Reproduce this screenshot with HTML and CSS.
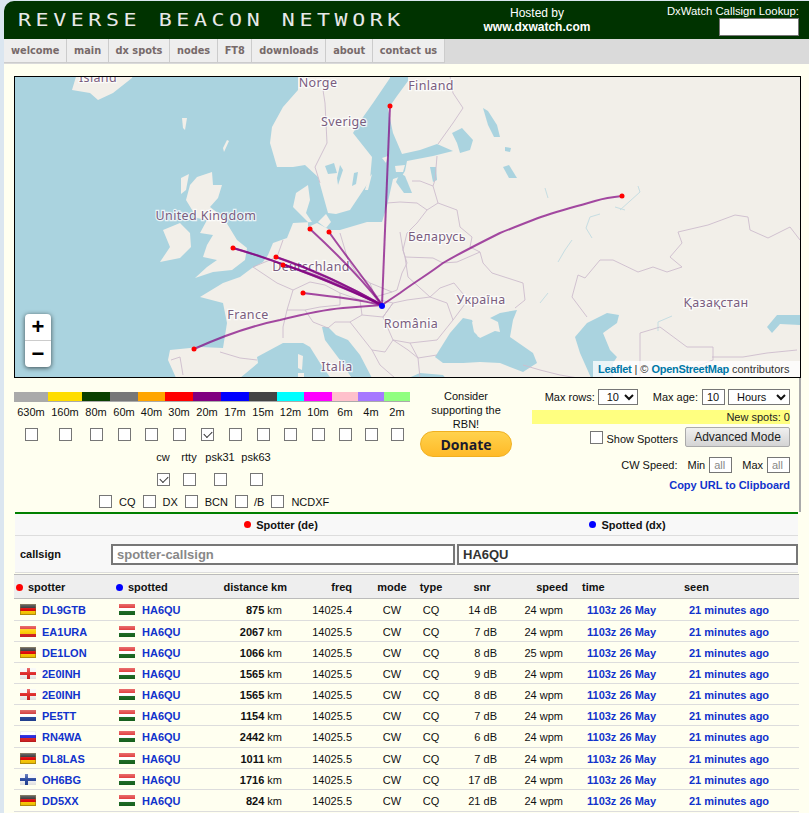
FILE: index.html
```
<!DOCTYPE html>
<html lang="en">
<head>
<meta charset="utf-8">
<title>Reverse Beacon Network</title>
<link rel="stylesheet" href="styles.css">
</head>
<body>
<div class="page">
  <header class="header">
    <div class="logo"><span class="logo-text">REVERSE BEACON NETWORK</span></div>
    <div class="hosted">Hosted by<br><b>www.dxwatch.com</b></div>
    <div class="lookup">
      <label class="lookup-label">DxWatch Callsign Lookup:</label>
      <input class="lookup-input" type="text">
    </div>
  </header>
  <nav class="nav">
    <a class="tab">welcome</a><a class="tab">main</a><a class="tab">dx spots</a><a class="tab">nodes</a><a class="tab">FT8</a><a class="tab">downloads</a><a class="tab">about</a><a class="tab">contact us</a>
  </nav>
  <main class="main">
    <div class="map">
      <svg class="map-svg" viewBox="15 77 785 300" width="785" height="300" xmlns="http://www.w3.org/2000/svg">
        <rect x="0" y="0" width="820" height="400" fill="#aad3df"/>
        <g class="geo">
          <g fill="#f2efe9">
            <path d="M78,70 L72,90 90,93 98,100 113,93 132,78 134,70Z"/>
            <path d="M163,230 180,223 190,233 191,247 180,258 160,262 170,247Z"/>
            <path d="M197,177 212,172 213,185 222,185 218,198 210,207 223,217 237,240 247,248 245,260 232,270 213,272 195,278 207,267 217,260 203,257 207,245 213,235 200,233 207,220 197,218 186,200 190,185Z"/>
            <path d="M182,118 187,118 185,130 183,128Z"/>
            <path d="M227,140 229,141 224,152 223,148Z"/>
            <path d="M181,178 189,174 186,190 181,194Z"/>
            <path d="M298,70 L298,90 283,107 272,127 270,143 277,167 293,167 305,165 318,177 328,213 336,214 350,210 370,180 372,157 353,133 361,120 373,103 390,78 390,70Z"/>
            <path d="M408,70 L408,81 397,96 388,109 393,133 402,154 420,150 437,144 453,151 433,156 407,161 405,171 402,176 393,179 387,206 382,222 367,222 340,230 330,230 317,223 308,227 308,222 293,207 296,193 308,185 310,200 306,213 312,222 293,223 287,238 273,243 268,255 263,262 252,268 240,277 223,283 200,297 223,303 227,323 223,348 200,347 170,350 168,360 177,380 820,380 820,70Z"/>
            <path d="M318,222 326,214 331,222 326,228Z"/>
            <path d="M368,179 372,174 368,190 365,190Z"/>
          </g>
          <g fill="#aad3df">
            <path d="M240,378 258,363 257,357 283,343 303,343 310,347 320,363 332,380 240,380Z"/>
            <path d="M322,327 328,327 336,335 348,340 360,355 373,380 353,380 340,360 325,340Z"/>
            <path d="M435,357 450,333 463,318 472,320 478,337 490,330 500,332 498,322 490,318 500,313 517,310 513,320 510,337 533,353 537,363 523,372 500,363 480,362 463,363 443,363Z"/>
            <path d="M575,337 587,323 607,313 619,315 617,323 603,333 610,350 617,357 613,363 613,380 592,380 580,353Z"/>
            <path d="M404,380 420,373 443,375 447,380Z"/>
            <path d="M400,173 405,176 412,193 404,193 396,182Z"/>
            <path d="M452,133 462,128 473,140 470,150 460,153 457,143Z"/>
            <path d="M483,108 488,111 497,125 500,137 494,137 488,125Z"/>
            <path d="M430,167 436,167 437,180 433,182Z"/>
            <path d="M503,167 509,165 517,178 509,178Z"/>
            <path d="M505,147 511,148 510,152 505,151Z"/>
            <path d="M767,327 777,315 800,315 800,325 780,324 772,333Z"/>
            <path d="M325,166 334,163 337,173 328,174Z"/>
            <path d="M340,165 343,170 338,185 337,178Z"/>
            <path d="M354,173 358,172 356,184 352,186Z"/>
          </g>
          <g fill="#f2efe9">
            <path d="M472,322 490,325 497,330 480,338 474,332Z"/>
            <path d="M298,354 303,356 302,370 298,368Z"/>
            <path d="M298,373 304,373 304,380 298,380Z"/>
            <path d="M395,166 405,165 403,172 396,172Z"/>
            <path d="M382,158 388,156 386,163Z"/>
          </g>
          <g class="borders">
            <path d="M450,76 453,93 463,108 453,123 438,144"/>
            <path d="M323,90 325,103 327,143 315,167 320,183"/>
            <path d="M437,156 435,180 433,186 438,203 457,210 460,227 472,237 470,247 480,252 483,263 492,273 523,283 525,300 515,308"/>
            <path d="M412,181 420,181 433,186"/>
            <path d="M387,203 400,202 417,203 427,210 438,203"/>
            <path d="M427,210 417,223 407,233 403,250 405,257 433,258 443,263 457,262 480,252"/>
            <path d="M400,232 403,250 407,263 402,273 397,290 392,292 370,283 357,274 348,260 340,233"/>
            <path d="M405,257 408,277 430,297 447,303 453,320 437,340 410,343 393,340 383,317 393,303 407,300 430,297"/>
            <path d="M430,297 440,288 454,283 468,300 453,320"/>
            <path d="M410,343 418,358 437,355"/>
            <path d="M393,340 408,350 418,358 420,378"/>
            <path d="M383,317 393,303 380,300 360,300 340,293 325,285 310,282 293,290"/>
            <path d="M370,283 375,297 392,292"/>
            <path d="M360,300 362,315 383,317"/>
            <path d="M362,315 350,322 335,322 328,328"/>
            <path d="M283,240 277,257 253,267 277,283 293,290 287,310 283,327 283,338"/>
            <path d="M287,310 305,310 320,307 340,305 340,293"/>
            <path d="M305,310 313,322 328,328"/>
            <path d="M350,322 372,350 385,352 393,340"/>
            <path d="M372,350 380,365 395,378"/>
            <path d="M220,352 240,358 257,360"/>
            <path d="M171,360 180,357 183,375"/>
            <path d="M800,240 790,227 768,238 750,230 748,217 735,215 708,225 678,232 682,243 670,257 682,267 667,272 653,267 638,272 613,260 600,260 585,278 578,275 572,297 587,317"/>
            <path d="M640,380 640,333 660,327 687,347 713,347 713,360 687,370"/>
            <path d="M712,357 743,357 767,353 797,350"/>
            <path d="M523,365 540,370 560,375 578,378"/>
          </g>
          <g class="rivers">
            <path d="M600,214 590,217 586,228 592,238"/>
            <path d="M620,210 640,192 638,186"/>
            <path d="M545,188 548,198"/>
            <path d="M558,262 565,250 572,240"/>
            <path d="M540,303 548,293"/>
            <path d="M658,331 658,322 672,316"/>
            <path d="M615,207 625,210"/>
          </g>
        </g>
        <g class="labels">
          <text x="98" y="82">Ísland</text>
          <text x="318" y="87">Norge</text>
          <text x="344" y="126">Sverige</text>
          <text x="431" y="90">Finland</text>
          <text x="206" y="220">United Kingdom</text>
          <text x="311" y="271">Deutschland</text>
          <text x="248" y="319">France</text>
          <text x="337" y="371">Italia</text>
          <text x="411" y="328">România</text>
          <text x="437" y="241">Беларусь</text>
          <text x="481" y="304">Україна</text>
          <text x="716" y="307">Қазақстан</text>
        </g>
        <g class="paths">
          <path d="M390,106 382,305"/>
          <path d="M194,349 C225,335 255,325 280,320 C300,315 320,310 343,308 L382,305"/>
          <path d="M233,248 C280,262 335,283 382,305"/>
          <path d="M233,248 C280,261 335,284 382,305"/>
          <path d="M276,257 C310,268 350,287 382,305"/>
          <path d="M276,257 C310,269 352,288 382,305"/>
          <path d="M283,265 C315,273 350,290 382,305"/>
          <path d="M303,293 C330,296 360,300 382,305"/>
          <path d="M310,229 C335,252 365,283 382,305"/>
          <path d="M329,232 C345,255 368,283 382,305"/>
          <path d="M622,196 C612,197 605,198 595,201 C575,207 553,212 533,220 C520,225 510,229 500,233 C480,243 460,253 443,263 C430,273 415,282 400,293 L382,305"/>
        </g>
        <g fill="#f00">
          <circle cx="390" cy="106" r="2.5"/>
          <circle cx="194" cy="349" r="2.5"/>
          <circle cx="233" cy="248" r="2.5"/>
          <circle cx="276" cy="257" r="2.5"/>
          <circle cx="283" cy="265" r="2.5"/>
          <circle cx="303" cy="293" r="2.5"/>
          <circle cx="310" cy="229" r="2.5"/>
          <circle cx="329" cy="232" r="2.5"/>
          <circle cx="622" cy="196" r="2.5"/>
        </g>
        <circle cx="382" cy="306" r="3" fill="#00f"/>
      </svg>
      <div class="zoom-ctl">
        <a class="zoom-btn">+</a>
        <a class="zoom-btn">−</a>
      </div>
      <div class="attrib"><a class="attrib-link">Leaflet</a> | © <a class="attrib-link">OpenStreetMap</a> contributors</div>
    </div>

    <section class="controls">
      <div class="bands">
        <div class="band-grid">
          <i class="bar b1"></i><i class="bar b2"></i><i class="bar b3"></i><i class="bar b4"></i><i class="bar b5"></i><i class="bar b6"></i><i class="bar b7"></i><i class="bar b8"></i><i class="bar b9"></i><i class="bar b10"></i><i class="bar b11"></i><i class="bar b12"></i><i class="bar b13"></i><i class="bar b14"></i>
          <span class="band-label">630m</span><span class="band-label">160m</span><span class="band-label">80m</span><span class="band-label">60m</span><span class="band-label">40m</span><span class="band-label">30m</span><span class="band-label">20m</span><span class="band-label">17m</span><span class="band-label">15m</span><span class="band-label">12m</span><span class="band-label">10m</span><span class="band-label">6m</span><span class="band-label">4m</span><span class="band-label">2m</span>
          <span class="band-check"><input class="cb" type="checkbox"></span><span class="band-check"><input class="cb" type="checkbox"></span><span class="band-check"><input class="cb" type="checkbox"></span><span class="band-check"><input class="cb" type="checkbox"></span><span class="band-check"><input class="cb" type="checkbox"></span><span class="band-check"><input class="cb" type="checkbox"></span><span class="band-check"><input class="cb" type="checkbox" checked></span><span class="band-check"><input class="cb" type="checkbox"></span><span class="band-check"><input class="cb" type="checkbox"></span><span class="band-check"><input class="cb" type="checkbox"></span><span class="band-check"><input class="cb" type="checkbox"></span><span class="band-check"><input class="cb" type="checkbox"></span><span class="band-check"><input class="cb" type="checkbox"></span><span class="band-check"><input class="cb" type="checkbox"></span>
        </div>
        <div class="mode-grid">
          <span class="mode-label">cw</span><span class="mode-label">rtty</span><span class="mode-label">psk31</span><span class="mode-label">psk63</span>
          <span class="band-check"><input class="cb" type="checkbox" checked></span><span class="band-check"><input class="cb" type="checkbox"></span><span class="band-check"><input class="cb" type="checkbox"></span><span class="band-check"><input class="cb" type="checkbox"></span>
        </div>
        <div class="filters">
          <input class="cb" type="checkbox"><span class="filter-label f-cq">CQ</span>
          <input class="cb" type="checkbox"><span class="filter-label f-dx">DX</span>
          <input class="cb" type="checkbox"><span class="filter-label f-bcn">BCN</span>
          <input class="cb" type="checkbox"><span class="filter-label f-b">/B</span>
          <input class="cb" type="checkbox"><span class="filter-label">NCDXF</span>
        </div>
      </div>
      <div class="donate-col">
        <p class="consider">Consider<br>supporting the<br>RBN!</p>
        <a class="donate">Donate</a>
      </div>
      <div class="options">
        <div class="opt-row">
          <span>Max rows:</span>
          <select class="sel sel-rows"><option>10</option></select>
          <span class="age-label">Max age:</span>
          <input class="box box-age" type="text" value="10">
          <select class="sel sel-unit"><option>Hours</option></select>
        </div>
        <div class="new-spots">New spots: 0</div>
        <div class="opt-row adv-row">
          <input class="cb" type="checkbox">
          <span class="show-label">Show Spotters</span>
          <button class="adv-btn" type="button">Advanced Mode</button>
        </div>
        <div class="opt-row speed-row">
          <span class="speed-label">CW Speed:</span>
          <span>Min</span>
          <input class="box box-speed" type="text" placeholder="all">
          <span class="max-label">Max</span>
          <input class="box box-speed" type="text" placeholder="all">
        </div>
        <a class="copy-url">Copy URL to Clipboard</a>
      </div>
    </section>

    <section class="panel">
      <div class="panel-head">
        <span></span>
        <span class="side-title side-de"><i class="dot dot-red"></i>Spotter (de)</span>
        <span class="side-title"><i class="dot dot-blue"></i>Spotted (dx)</span>
      </div>
      <div class="panel-form">
        <span class="form-label">callsign</span>
        <input class="call-input" type="text" placeholder="spotter-callsign">
        <input class="call-input" type="text" value="HA6QU">
      </div>
    </section>

    <table class="spots">
      <colgroup>
        <col class="c1"><col class="c2"><col class="c3"><col class="c4"><col class="c5"><col class="c6"><col class="c7"><col class="c8"><col class="c9"><col class="c10">
      </colgroup>
      <thead>
        <tr>
          <th class="th-sp"><i class="dot dot-red"></i>spotter</th>
          <th class="th-sp2"><i class="dot dot-blue"></i>spotted</th>
          <th class="th-dist">distance km</th>
          <th class="th-freq">freq</th>
          <th class="th-c">mode</th>
          <th class="th-c">type</th>
          <th class="th-c">snr</th>
          <th class="th-speed">speed</th>
          <th class="th-time">time</th>
          <th class="th-seen">seen</th>
        </tr>
      </thead>
      <tbody>
        <tr class="tall"><td class="call"><i class="flag de"></i><a>DL9GTB</a></td><td class="call2"><i class="flag hu"></i><a>HA6QU</a></td><td class="dist"><b>875</b> km</td><td class="freq">14025.4</td><td class="ctr">CW</td><td class="ctr">CQ</td><td class="snr">14 dB</td><td class="speed">24 wpm</td><td class="time"><a>1103z 26 May</a></td><td class="seen"><a>21 minutes ago</a></td></tr>
        <tr><td class="call"><i class="flag es"></i><a>EA1URA</a></td><td class="call2"><i class="flag hu"></i><a>HA6QU</a></td><td class="dist"><b>2067</b> km</td><td class="freq">14025.5</td><td class="ctr">CW</td><td class="ctr">CQ</td><td class="snr">7 dB</td><td class="speed">24 wpm</td><td class="time"><a>1103z 26 May</a></td><td class="seen"><a>21 minutes ago</a></td></tr>
        <tr><td class="call"><i class="flag de"></i><a>DE1LON</a></td><td class="call2"><i class="flag hu"></i><a>HA6QU</a></td><td class="dist"><b>1066</b> km</td><td class="freq">14025.5</td><td class="ctr">CW</td><td class="ctr">CQ</td><td class="snr">8 dB</td><td class="speed">25 wpm</td><td class="time"><a>1103z 26 May</a></td><td class="seen"><a>21 minutes ago</a></td></tr>
        <tr><td class="call"><i class="flag en"></i><a>2E0INH</a></td><td class="call2"><i class="flag hu"></i><a>HA6QU</a></td><td class="dist"><b>1565</b> km</td><td class="freq">14025.5</td><td class="ctr">CW</td><td class="ctr">CQ</td><td class="snr">9 dB</td><td class="speed">24 wpm</td><td class="time"><a>1103z 26 May</a></td><td class="seen"><a>21 minutes ago</a></td></tr>
        <tr><td class="call"><i class="flag en"></i><a>2E0INH</a></td><td class="call2"><i class="flag hu"></i><a>HA6QU</a></td><td class="dist"><b>1565</b> km</td><td class="freq">14025.5</td><td class="ctr">CW</td><td class="ctr">CQ</td><td class="snr">8 dB</td><td class="speed">24 wpm</td><td class="time"><a>1103z 26 May</a></td><td class="seen"><a>21 minutes ago</a></td></tr>
        <tr><td class="call"><i class="flag nl"></i><a>PE5TT</a></td><td class="call2"><i class="flag hu"></i><a>HA6QU</a></td><td class="dist"><b>1154</b> km</td><td class="freq">14025.5</td><td class="ctr">CW</td><td class="ctr">CQ</td><td class="snr">7 dB</td><td class="speed">24 wpm</td><td class="time"><a>1103z 26 May</a></td><td class="seen"><a>21 minutes ago</a></td></tr>
        <tr class="tall"><td class="call"><i class="flag ru"></i><a>RN4WA</a></td><td class="call2"><i class="flag hu"></i><a>HA6QU</a></td><td class="dist"><b>2442</b> km</td><td class="freq">14025.5</td><td class="ctr">CW</td><td class="ctr">CQ</td><td class="snr">6 dB</td><td class="speed">24 wpm</td><td class="time"><a>1103z 26 May</a></td><td class="seen"><a>21 minutes ago</a></td></tr>
        <tr><td class="call"><i class="flag de"></i><a>DL8LAS</a></td><td class="call2"><i class="flag hu"></i><a>HA6QU</a></td><td class="dist"><b>1011</b> km</td><td class="freq">14025.5</td><td class="ctr">CW</td><td class="ctr">CQ</td><td class="snr">7 dB</td><td class="speed">24 wpm</td><td class="time"><a>1103z 26 May</a></td><td class="seen"><a>21 minutes ago</a></td></tr>
        <tr><td class="call"><i class="flag fi"></i><a>OH6BG</a></td><td class="call2"><i class="flag hu"></i><a>HA6QU</a></td><td class="dist"><b>1716</b> km</td><td class="freq">14025.5</td><td class="ctr">CW</td><td class="ctr">CQ</td><td class="snr">17 dB</td><td class="speed">24 wpm</td><td class="time"><a>1103z 26 May</a></td><td class="seen"><a>21 minutes ago</a></td></tr>
        <tr class="tall"><td class="call"><i class="flag de"></i><a>DD5XX</a></td><td class="call2"><i class="flag hu"></i><a>HA6QU</a></td><td class="dist"><b>824</b> km</td><td class="freq">14025.5</td><td class="ctr">CW</td><td class="ctr">CQ</td><td class="snr">21 dB</td><td class="speed">24 wpm</td><td class="time"><a>1103z 26 May</a></td><td class="seen"><a>21 minutes ago</a></td></tr>
      </tbody>
    </table>
  </main>
</div>
</body>
</html>
```
FILE: styles.css
```
* { box-sizing: border-box; }
html, body { margin: 0; padding: 0; height: 813px; overflow: hidden; }
body {
  background: #dbe6f0;
  font-family: "Liberation Sans", Arial, sans-serif;
  font-size: 11px;
  color: #111;
}
.page { margin-left: 4px; padding-top: 1px; }

/* header */
.header {
  height: 38px;
  background: #003300;
  border-top-left-radius: 10px;
  display: flex;
  align-items: flex-start;
  color: #fff;
}
.logo {
  width: 400px;
  padding: 8px 0 0 14px;
  white-space: nowrap;
}
.logo-text {
  display: inline-block;
  transform: scaleX(1.2);
  transform-origin: left center;
  font-family: "DejaVu Sans Mono", monospace;
  font-size: 18px;
  line-height: 22px;
  letter-spacing: 3.82px;
  color: #e8e8e8;
}
.hosted {
  width: 266px;
  padding-top: 5px;
  text-align: center;
  font-size: 12px;
  line-height: 14px;
}
.lookup {
  width: 129px;
  display: flex;
  flex-direction: column;
  align-items: flex-end;
  padding-top: 3px;
}
.lookup-label { font-size: 11.3px; line-height: 14px; white-space: nowrap; }
.lookup-input {
  flex: none;
  width: 80px;
  height: 18px;
  margin: 0;
  background: #fff;
  border: 1px solid #767676;
}

/* nav */
.nav { height: 25px; background: #dadada; display: flex; align-items: flex-start; }
.tab {
  height: 24px;
  padding: 0 6.5px 0 7px;
  background: #eee;
  border-right: 1px solid #ccc;
  border-bottom: 1px solid #ccc;
  font-family: "DejaVu Sans", Verdana, sans-serif;
  font-weight: bold;
  font-size: 9.8px;
  line-height: 24px;
  color: #776a6a;
  white-space: nowrap;
}

/* main */
.main {
  height: 749px;
  background: #fffff0;
  padding: 12px 0 0 10px;
}

/* map */
.map {
  position: relative;
  width: 787px;
  height: 302px;
  border: 1px solid #000;
  overflow: hidden;
  background: #aad3df;
}
.map-svg { display: block; }
.borders { fill: none; stroke: #cdbccd; stroke-width: .9; }
.rivers { fill: none; stroke: #aad3df; stroke-width: 1; opacity: .6; }
.labels text {
  font-family: "Noto Sans", sans-serif;
  font-size: 12.5px;
  letter-spacing: .35px;
  fill: #7a5d7f;
  stroke: #fff;
  stroke-opacity: .75;
  stroke-width: 2.5px;
  paint-order: stroke;
  text-anchor: middle;
}
.paths { fill: none; stroke: #800080; stroke-width: 2; stroke-opacity: .7; stroke-linejoin: round; }
.zoom-ctl {
  position: absolute;
  left: 10px;
  top: 237px;
  width: 26px;
  height: 53px;
  background: #fff;
  border-radius: 4px;
  box-shadow: 0 1px 5px rgba(0,0,0,.65);
  display: flex;
  flex-direction: column;
}
.zoom-btn {
  height: 26px;
  text-align: center;
  font-family: "Liberation Sans", sans-serif;
  font-weight: bold;
  font-size: 22px;
  line-height: 25px;
  color: #000;
}
.zoom-btn:first-child { height: 27px; border-bottom: 1px solid #ccc; }
.attrib {
  position: absolute;
  right: 0;
  bottom: 0;
  width: 207px;
  height: 16px;
  padding-left: 5px;
  background: rgba(255,255,255,.75);
  font-size: 11px;
  line-height: 16px;
  color: #333;
  white-space: nowrap;
}
.attrib-link { color: #0078a8; font-weight: bold; letter-spacing: -.3px; }

/* controls */
.controls {
  display: flex;
  width: 787px;
  height: 134px;
  border-right: 2px solid #aaa;
}
.bands { width: 396px; padding-top: 14px; }
.band-grid {
  display: grid;
  grid-template-columns: 34px 34px 28px 28px 27px 28px 28px 28px 28px 27px 28px 26px 26px 26px;
}
.bar { display: block; height: 10px; border-bottom: 1px solid #aaa; }
.b1 { background: #aaa; } .b2 { background: #ffdd00; } .b3 { background: #0a4000; }
.b4 { background: #777; } .b5 { background: #ffa500; } .b6 { background: #f00; }
.b7 { background: #800080; } .b8 { background: #00f; } .b9 { background: #444; }
.b10 { background: #0ff; } .b11 { background: #f0f; } .b12 { background: #ffc0cb; }
.b13 { background: #a678ff; } .b14 { background: #90ff80; }
.band-label {
  margin-top: 3px;
  height: 14px;
  line-height: 14px;
  text-align: center;
  white-space: nowrap;
}
.band-check { display: flex; justify-content: center; margin-top: 9px; }
.cb {
  appearance: none;
  -webkit-appearance: none;
  position: relative;
  flex: none;
  display: block;
  width: 13px;
  height: 13px;
  margin: 0;
  background: #fff;
  border: 1px solid #767676;
}
.cb:checked::after {
  content: "";
  position: absolute;
  left: 2px;
  top: 1.5px;
  width: 7px;
  height: 4px;
  border-left: 1.4px solid #333;
  border-bottom: 1.4px solid #333;
  transform: rotate(-45deg);
}
.mode-grid {
  display: grid;
  grid-template-columns: 26px 26px 36px 36px;
  margin: 9px 0 0 136px;
}
.mode-label { height: 14px; line-height: 14px; text-align: center; white-space: nowrap; }
.filters {
  display: flex;
  align-items: center;
  margin: 8px 0 0 85px;
  height: 14px;
}
.filter-label { margin-left: 7px; line-height: 14px; position: relative; top: 1px; }
.f-cq { margin-right: 7px; }
.f-dx { margin-right: 7px; }
.f-bcn { margin-right: 7px; }
.f-b { margin-right: 7px; margin-left: 6px; }

.donate-col { width: 92px; margin-left: 10px; padding-top: 11px; text-align: center; }
.consider { margin: 0; height: 42px; line-height: 14px; white-space: nowrap; }
.donate {
  display: block;
  height: 26px;
  border-radius: 13px;
  background: linear-gradient(#ffd24d, #ffba28);
  border: 1px solid #f0b020;
  font-family: "Open Sans", sans-serif;
  font-weight: 700;
  font-size: 14px;
  line-height: 26px;
  color: #1a1a2e;
}

.options {
  width: 258px;
  margin-left: 20px;
  padding-top: 11px;
  display: flex;
  flex-direction: column;
}
.opt-row { display: flex; align-items: center; justify-content: flex-end; height: 16px; white-space: nowrap; }
.sel {
  height: 16px;
  margin: 0 0 0 3px;
  padding: 0 0 0 4px;
  background: #fff;
  border: 1px solid #767676;
  border-radius: 0;
  font-family: "Liberation Sans", sans-serif;
  font-size: 11px;
  color: #111;
}
.sel-rows { width: 40px; }
.sel-unit { width: 62px; }
.age-label { margin-left: 15px; }
.box {
  height: 16px;
  margin: 0 0 0 4px;
  padding: 0 4px;
  background: #fff;
  border: 1px solid #767676;
  font-family: "Liberation Sans", sans-serif;
  font-size: 11px;
  color: #111;
}
.box::placeholder { color: #888; }
.box-age { width: 23px; }
.box-speed { width: 23px; }
.new-spots {
  margin-top: 5px;
  height: 14px;
  background: #ffff80;
  text-align: right;
  line-height: 15px;
  color: #222;
}
.adv-row { height: 20px; margin-top: 3px; }
.show-label { margin: 4px 7px 0 3px; }
.adv-btn {
  width: 105px;
  height: 20px;
  margin: 0;
  padding: 0;
  background: linear-gradient(#f0f0f0, #d4d4d4);
  border: 1px solid #aaa;
  border-radius: 2px;
  font-family: "Liberation Sans", sans-serif;
  font-size: 12px;
  color: #222;
}
.speed-row { margin-top: 10px; }
.speed-label { margin-right: 10px; }
.max-label { margin-left: 10px; }
.copy-url {
  margin-top: 5px;
  text-align: right;
  font-weight: bold;
  line-height: 14px;
  color: #1133cc;
}

/* panel */
.panel {
  width: 783px;
  margin-left: 1px;
  border-top: 2px solid #008000;
  background: #f8f8f8;
}
.panel-head {
  display: grid;
  grid-template-columns: 96px 346px 341px;
  height: 22px;
  border-bottom: 1px solid #ddd;
}
.side-title {
  display: flex;
  align-items: center;
  justify-content: center;
  font-weight: bold;
  height: 21px;
}
.side-de { padding-right: 6px; }
.dot {
  display: inline-block;
  width: 7px;
  height: 7px;
  border-radius: 50%;
  margin-right: 5px;
  flex: none;
}
.dot-red { background: #f00; }
.dot-blue { background: #00f; }
.panel-form {
  display: grid;
  grid-template-columns: 96px 344px 343px;
  height: 37px;
  padding-top: 8px;
  border-bottom: 1px solid #ddd;
  align-items: start;
}
.form-label { padding-left: 5px; font-weight: bold; line-height: 21px; }
.call-input {
  height: 21px;
  width: 100%;
  margin: 0;
  padding: 0 4px;
  background: #fff;
  border: 2px solid #777;
  font-family: "Liberation Sans", sans-serif;
  font-weight: bold;
  font-size: 13px;
  color: #333;
}
.call-input + .call-input { margin-left: 2px; width: 341px; }
.call-input::placeholder { color: #888; }

/* table */
.spots {
  table-layout: fixed;
  border-collapse: collapse;
  width: 785px;
  margin-top: 1px;
}
.c1 { width: 101px; } .c2 { width: 100px; } .c3 { width: 77px; } .c4 { width: 78px; }
.c5 { width: 44px; } .c6 { width: 34px; } .c7 { width: 68px; } .c8 { width: 59px; }
.c9 { width: 105px; } .c10 { width: 119px; }
.spots thead tr { height: 24px; background: #eee; border-top: 1px solid #bbb; border-bottom: 1px solid #bbb; }
.spots th { padding: 0; font-size: 11px; font-weight: bold; text-align: left; white-space: nowrap; vertical-align: middle; }
.spots td { padding: 1px 0 0; height: 21px; white-space: nowrap; vertical-align: middle; }
.spots tbody tr { height: 21px; border-bottom: 1px solid #ddd; }
.spots tbody tr.tall, .spots tbody tr.tall td { height: 22px; padding-top: 0; }
.th-sp { padding-left: 2px !important; }
.th-sp2 { padding-left: 1px !important; }
.th-dist { text-align: right !important; padding-right: 5px !important; }
.th-freq { text-align: right !important; padding-right: 18px !important; }
.th-c { text-align: center !important; }
.th-speed { text-align: right !important; padding-right: 7px !important; }
.th-time { padding-left: 7px !important; }
.th-seen { padding-left: 4px !important; }
.call { padding-left: 6px !important; }
.call2 { padding-left: 4px !important; }
.call a, .call2 a, .time a, .seen a { color: #1133cc; font-weight: bold; }
.flag {
  display: inline-block;
  width: 16px;
  height: 11px;
  margin-right: 6px;
  vertical-align: -1px;
  position: relative;
}
.call2 .flag { margin-right: 7px; }
.flag::after {
  content: "";
  position: absolute;
  inset: 0;
  background: linear-gradient(rgba(255,255,255,.35), rgba(255,255,255,.05) 50%, rgba(0,0,0,.1));
}
.de { background: linear-gradient(#222 33%, #d00 33% 66%, #fc0 66%); box-shadow: inset 0 0 0 1px rgba(120,90,20,.45); }
.hu { background: linear-gradient(#d22 33%, #fff 33% 66%, #186a20 66%); }
.es { background: linear-gradient(#d22 25%, #fc0 25% 75%, #d22 75%); }
.nl { background: linear-gradient(#c22 33%, #fff 33% 66%, #24449c 66%); }
.ru { background: linear-gradient(#fff 33%, #22d 33% 66%, #d22 66%); box-shadow: inset 0 0 0 1px rgba(0,0,0,.08); }
.en {
  background:
    linear-gradient(#d22, #d22) center / 100% 3px no-repeat,
    linear-gradient(#d22, #d22) center / 3px 100% no-repeat,
    #f6f6f6;
}
.fi {
  background:
    linear-gradient(#24449c, #24449c) center / 100% 3px no-repeat,
    linear-gradient(#24449c, #24449c) 5px 0 / 3px 100% no-repeat,
    #f6f6f6;
}
.dist { text-align: right; padding-right: 10px !important; }
.freq { text-align: right; padding-right: 18px !important; }
.ctr { text-align: center; }
.snr { text-align: right; padding-right: 19px !important; }
.speed { text-align: right; padding-right: 12px !important; }
.time { padding-left: 12px !important; }
.seen { padding-left: 9px !important; }
```
